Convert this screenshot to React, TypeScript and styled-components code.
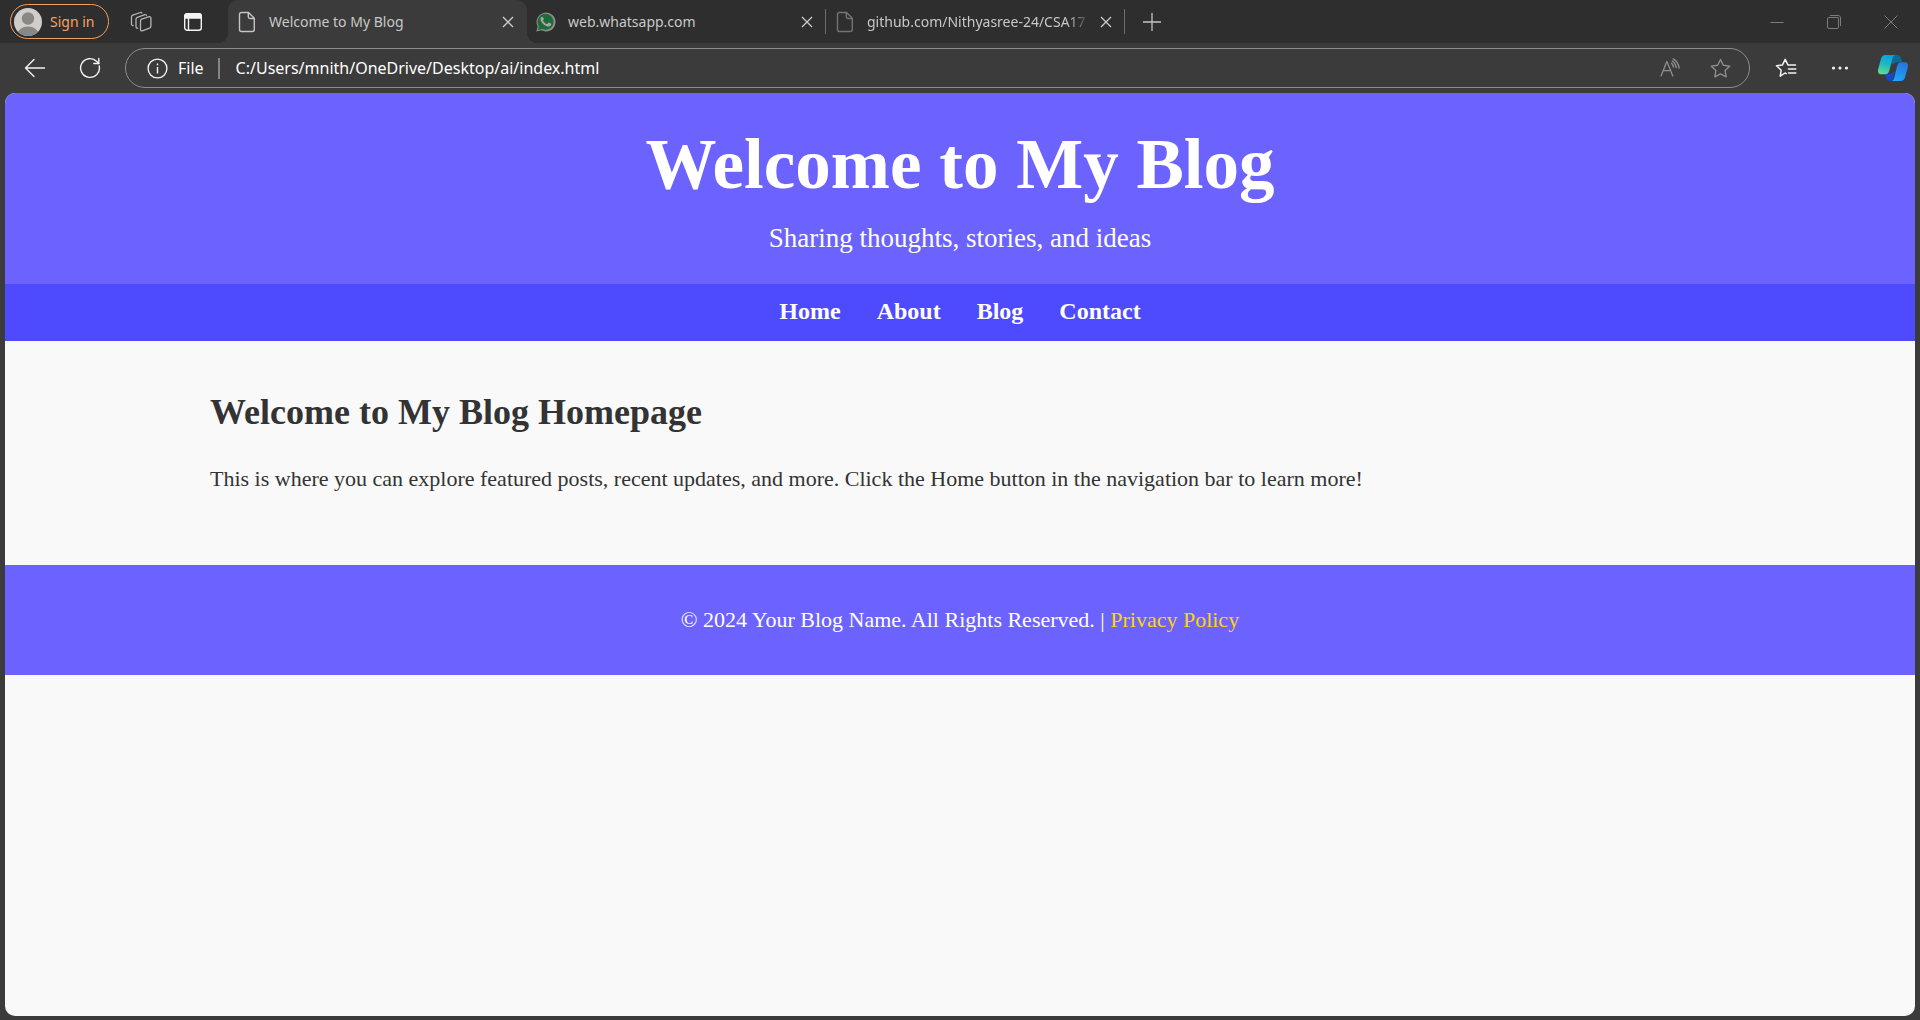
import React from "react";
import styled, { createGlobalStyle, css } from "styled-components";

const strip = "#2e2e2e";
const chrome = "#3b3b3b";
const ui = '"Segoe UI", "Noto Sans", "Open Sans", sans-serif';
const serif = 'Georgia, "Liberation Serif", serif';

const GlobalStyle = createGlobalStyle`
  * { box-sizing: border-box; }
  body { margin: 0; background: ${chrome}; }
  button, input { font: inherit; color: inherit; background: none; border: 0; padding: 0; margin: 0; }
  svg { display: block; flex: none; }
`;

const Window = styled.div`
  min-height: 100vh;
  display: flex;
  flex-direction: column;
  background: ${chrome};
  font-family: ${ui};
`;

const TabStrip = styled.div`
  display: flex;
  align-items: center;
  height: 43px;
  background: ${strip};
  color: #c8c8c8;
  font-size: 14px;
`;

const StripTools = styled.div`
  display: flex;
  align-items: center;
  flex: none;
  width: 228px;
  padding-left: 10px;
  gap: 21px;
`;

const Profile = styled.button`
  display: flex;
  align-items: center;
  gap: 8px;
  width: 99px;
  height: 35px;
  padding-left: 3px;
  border: 1px solid #f0a062;
  border-radius: 18px;
  color: #f3a467;
  white-space: nowrap;
`;

const IconButton = styled.button<{ $w?: number; $tone?: string }>`
  display: flex;
  align-items: center;
  justify-content: center;
  flex: none;
  width: ${(p) => p.$w ?? 20}px;
  height: 32px;
  color: ${(p) => p.$tone ?? "#f2f2f2"};
`;

const Tab = styled.div<{ $active?: boolean; $divided?: boolean }>`
  position: relative;
  display: flex;
  align-items: center;
  align-self: stretch;
  flex: 0 1 299px;
  min-width: 0;
  padding: 0 9px;
  ${(p) =>
    p.$active &&
    css`
      background: ${chrome};
      border-radius: 10px 10px 0 0;
      &::before,
      &::after {
        content: "";
        position: absolute;
        bottom: 0;
        width: 10px;
        height: 10px;
      }
      &::before {
        right: 100%;
        background: radial-gradient(circle at 0 0, transparent 10px, ${chrome} 10px);
      }
      &::after {
        left: 100%;
        background: radial-gradient(circle at 100% 0, transparent 10px, ${chrome} 10px);
      }
    `}
  ${(p) =>
    p.$divided &&
    css`
      &::after {
        content: "";
        position: absolute;
        right: 0;
        top: 9px;
        width: 1px;
        height: 25px;
        background: #6c6c6c;
      }
    `}
`;

const TabTitle = styled.button<{ $fade?: boolean }>`
  display: flex;
  align-items: center;
  gap: 12px;
  flex: 1;
  min-width: 0;
  height: 32px;
  text-align: left;
  white-space: nowrap;
  overflow: hidden;
  span {
    ${(p) =>
      p.$fade && "mask-image: linear-gradient(to right, #000 calc(100% - 20px), rgba(0, 0, 0, 0.2));"}
  }
`;

const WindowControls = styled.div`
  display: flex;
  align-items: center;
  margin-left: auto;
`;

const Toolbar = styled.div`
  display: flex;
  align-items: center;
  height: 50px;
  padding-left: 7px;
  color: #fff;
  font-size: 16px;
`;

const AddressBar = styled.form`
  display: flex;
  align-items: center;
  flex: 1;
  min-width: 0;
  height: 40px;
  margin: 0 8px;
  padding: 0 4px 0 21px;
  border: 1px solid #8d8d8d;
  border-radius: 20px;
`;

const SiteInfo = styled.button`
  display: flex;
  align-items: center;
  gap: 10px;
  padding-right: 14px;
  line-height: 20px;
  border-right: 2px solid #858585;
`;

const Address = styled.input`
  flex: 1;
  min-width: 0;
  height: 32px;
  padding-left: 16px;
  outline: none;
`;

const Viewport = styled.div`
  flex: 1;
  margin: 0 5px 4px;
  border-radius: 10px;
  overflow: hidden;
  background: #f9f9f9;
  color: #333;
  font-family: ${serif};
`;

const Header = styled.header`
  display: flex;
  flex-direction: column;
  gap: 16px;
  padding: 31px 20px 27px;
  background: #6c63ff;
  color: #fff;
  text-align: center;
`;

const Title = styled.h1`
  margin: 0;
  font-size: 71px;
  line-height: 80px;
`;

const Tagline = styled.p`
  margin: 0;
  font-size: 27px;
  line-height: 37px;
`;

const Nav = styled.nav`
  display: flex;
  justify-content: center;
  gap: 36px;
  padding: 14px 20px 16px;
  background: #4e4bff;
`;

const NavLink = styled.a`
  color: #fff;
  font-size: 24px;
  font-weight: bold;
  line-height: 27px;
  text-decoration: none;
`;

const Main = styled.main`
  display: flex;
  flex-direction: column;
  gap: 28px;
  max-width: 1500px;
  margin: 0 auto;
  padding: 50px 0 69px;
`;

const Heading = styled.h2`
  margin: 0;
  font-size: 36px;
  line-height: 42px;
`;

const Text = styled.p`
  margin: 0;
  font-size: 22px;
  line-height: 35px;
`;

const Footer = styled.footer`
  padding: 37px 20px;
  background: #6c63ff;
  color: #fff;
  font-size: 22px;
  line-height: 36px;
  text-align: center;
`;

const PolicyLink = styled.a`
  color: #ffd700;
  text-decoration: none;
`;

const PageIcon = ({ color }: { color: string }) => (
  <svg width="20" height="22" viewBox="0 0 20 22" fill="none" stroke={color} strokeWidth="1.4" strokeLinejoin="round">
    <path d="M4.5 1.5h7l5.8 5.8v11.2a2 2 0 0 1-2 2H4.5a2 2 0 0 1-2-2v-15a2 2 0 0 1 2-2z" />
    <path d="M11.3 1.7v4.1a1.7 1.7 0 0 0 1.7 1.7h4.1" />
  </svg>
);

const WhatsAppIcon = () => (
  <svg width="20" height="20" viewBox="0 0 20 20">
    <path d="M.3 19.6l1.4-5A9.5 9.5 0 1 1 5.4 18.3z" fill="#8b8f8c" />
    <path d="M1.9 18l1-3.7A8 8 0 1 1 6 17z" fill="#1c6b38" />
    <path
      d="M6.9 5.3c-.3-.5-.5-.5-.9-.5-.5 0-1.500.7-1.500 2.200 0 3 4.300 7.600 8 7.600 1.600 0 2.700-1 2.700-2.300 0-.6-.1-.6-.5-.8l-1.800-.9c-.3-.1-.5-.1-.7.200l-.9 1.100c-.2.2-.4.2-.7.100-1.400-.6-2.700-1.700-3.500-3.200-.1-.3 0-.5.2-.7.6-.7.700-.9.500-1.300z"
      fill="#a3a8a4"
    />
  </svg>
);

const CloseIcon = () => (
  <svg width="12" height="12" viewBox="0 0 12 12" stroke="currentColor" strokeWidth="1.3">
    <path d="M1 1l10 10M11 1L1 11" />
  </svg>
);

const AvatarIcon = () => (
  <svg width="28" height="28" viewBox="0 0 28 28">
    <defs>
      <clipPath id="avatar">
        <circle cx="14" cy="14" r="14" />
      </clipPath>
    </defs>
    <g clipPath="url(#avatar)">
      <rect width="28" height="28" fill="#d0cecc" />
      <circle cx="14" cy="10.5" r="6.2" fill="#8b8785" />
      <ellipse cx="14" cy="26" rx="10.5" ry="7.5" fill="#8b8785" />
    </g>
  </svg>
);

const WorkspacesIcon = () => (
  <svg width="22" height="22" viewBox="0 0 22 22" fill="none" stroke="#b5b5b5" strokeWidth="1.3" strokeLinejoin="round" strokeLinecap="round">
    <path d="M11.6 8.2l7.6-2.5a1.3 1.3 0 0 1 1.7 1.3v8.3a2 2 0 0 1-1.4 1.9l-7.3 2.7a1.3 1.3 0 0 1-1.7-1.2v-8.5a2 2 0 0 1 1.1-2z" />
    <path d="M7.7 17.2a1.3 1.3 0 0 1-1.7-1.2V8.2a2 2 0 0 1 1.3-1.9l7.6-2.6a1.3 1.3 0 0 1 1.5.5" />
    <path d="M3.2 14.5a1.3 1.3 0 0 1-1.7-1.2V6.1a2 2 0 0 1 1.3-1.9l7.6-2.7a1.3 1.3 0 0 1 1.5.5" />
  </svg>
);

const TabActionsIcon = () => (
  <svg width="20" height="20" viewBox="0 0 20 20" fill="none" stroke="#f4f4f4" strokeWidth="1.4">
    <rect x="1.7" y="1.7" width="16.6" height="16.6" rx="2.5" />
    <path d="M1.7 6V4a2.3 2.3 0 0 1 2.3-2.3h12A2.3 2.3 0 0 1 18.3 4v2z" fill="#f4f4f4" />
    <path d="M5.5 6v12" />
  </svg>
);

const StarPath = "M10 1.4l2.7 5.5 6 .9-4.3 4.2 1 6L10 15.2 4.6 18l1-6L1.3 7.8l6-.9z";

const CopilotIcon = () => (
  <svg width="32" height="28" viewBox="0 0 32 28">
    <defs>
      <linearGradient id="copilotLeft" x1="0.6" y1="0" x2="0.3" y2="1">
        <stop offset="0" stopColor="#0a9fe0" />
        <stop offset="0.5" stopColor="#1fb9c2" />
        <stop offset="1" stopColor="#62dc8b" />
      </linearGradient>
      <linearGradient id="copilotRight" x1="0.7" y1="0" x2="0.3" y2="1">
        <stop offset="0" stopColor="#2a72e0" />
        <stop offset="1" stopColor="#18a9fb" />
      </linearGradient>
    </defs>
    <path d="M16 1h4c2.3 0 3.3 1 4 3.2l1.3 4H20c-2 0-3 1-3.6 2.8L13 8z" fill="#0d6a96" />
    <path d="M8 20h6l4-3-1.6 6.2c-.6 2.3-1.5 3.8-3.4 3.8-2.2 0-3-1-3.6-3z" fill="#1647d0" />
    <path d="M8.500 1H19c-2 0-3 1.400-3.600 3.500l-3.100 12.300c-.8 2.500-1.900 3.500-4.300 3.500H4.500C1.500 20.300.4 18 1.200 15L4 4.800C4.700 2.300 6 1 8.500 1z" fill="url(#copilotLeft)" />
    <path d="M23.500 27H14c2 0 2.800-1.400 3.400-3.500l2.800-11.800c.7-2.500 1.900-3.500 4.200-3.500h3.200c3 0 4 2.300 3.200 5.200L28 23.200c-.7 2.500-2 3.800-4.500 3.800z" fill="url(#copilotRight)" />
  </svg>
);

export default function App() {
  return (
    <Window>
      <GlobalStyle />
      <TabStrip>
        <StripTools>
          <Profile>
            <AvatarIcon />
            Sign in
          </Profile>
          <IconButton $w={22} aria-label="Workspaces"><WorkspacesIcon /></IconButton>
          <IconButton $w={40} aria-label="Tab actions"><TabActionsIcon /></IconButton>
        </StripTools>
        <Tab $active>
          <TabTitle>
            <PageIcon color="#c4c4c4" />
            <span>Welcome to My Blog</span>
          </TabTitle>
          <IconButton $tone="#cccccc" aria-label="Close tab"><CloseIcon /></IconButton>
        </Tab>
        <Tab $divided>
          <TabTitle>
            <WhatsAppIcon />
            <span>web.whatsapp.com</span>
          </TabTitle>
          <IconButton $tone="#cccccc" aria-label="Close tab"><CloseIcon /></IconButton>
        </Tab>
        <Tab $divided>
          <TabTitle $fade>
            <PageIcon color="#737373" />
            <span>github.com/Nithyasree-24/CSA17</span>
          </TabTitle>
          <IconButton $tone="#cccccc" aria-label="Close tab"><CloseIcon /></IconButton>
        </Tab>
        <IconButton $w={54} $tone="#c4c4c4" aria-label="New tab">
          <svg width="18" height="18" viewBox="0 0 18 18" stroke="currentColor" strokeWidth="1.3">
            <path d="M9 0v18M0 9h18" />
          </svg>
        </IconButton>
        <WindowControls>
          <IconButton $w={57} $tone="#7c7c7c" aria-label="Minimize">
            <svg width="14" height="14" viewBox="0 0 14 14" stroke="currentColor"><path d="M.5 7.5h13" /></svg>
          </IconButton>
          <IconButton $w={57} $tone="#7c7c7c" aria-label="Restore">
            <svg width="14" height="14" viewBox="0 0 14 14" fill="none" stroke="currentColor">
              <rect x=".5" y="2.5" width="11" height="11" rx="1.5" />
              <path d="M3 .5h8a2.5 2.5 0 0 1 2.5 2.5v8" />
            </svg>
          </IconButton>
          <IconButton $w={58} $tone="#7c7c7c" aria-label="Close window">
            <svg width="14" height="14" viewBox="0 0 14 14" stroke="currentColor"><path d="M.5.5l13 13M13.5.5l-13 13" /></svg>
          </IconButton>
        </WindowControls>
      </TabStrip>

      <Toolbar>
        <IconButton $w={55} aria-label="Back">
          <svg width="22" height="20" viewBox="0 0 22 20" fill="none" stroke="currentColor" strokeWidth="1.4" strokeLinecap="round" strokeLinejoin="round">
            <path d="M20.5 10H1.5M10 1.5L1.5 10l8.5 8.5" />
          </svg>
        </IconButton>
        <IconButton $w={55} aria-label="Refresh">
          <svg width="22" height="22" viewBox="0 0 22 22" fill="none" stroke="currentColor" strokeWidth="1.4" strokeLinecap="round" strokeLinejoin="round">
            <path d="M20.2 9A9.4 9.4 0 1 1 17.8 4.5L19.8 6.5" />
            <path d="M19.8 1.5v5h-5" />
          </svg>
        </IconButton>
        <AddressBar onSubmit={(e) => e.preventDefault()}>
          <SiteInfo type="button">
            <svg width="21" height="21" viewBox="0 0 21 21" fill="none" stroke="#f2f2f2" strokeWidth="1.4">
              <circle cx="10.5" cy="10.5" r="9.4" />
              <path d="M10.5 9v6.500M10.5 5.500v1.700" />
            </svg>
            File
          </SiteInfo>
          <Address aria-label="Address" defaultValue="C:/Users/mnith/OneDrive/Desktop/ai/index.html" spellCheck={false} />
          <IconButton type="button" $w={50} $tone="#8e8e8e" aria-label="Read aloud">
            <svg width="20" height="20" viewBox="0 0 20 20" fill="none" stroke="currentColor" strokeWidth="1.3" strokeLinecap="round" strokeLinejoin="round">
              <path d="M1 18L6.9 3.500 12.800 18M3 12.700h7.800" />
              <path d="M11.500 5.200a7 7 0 0 1 2 4M12.300 2.900a10 10 0 0 1 4 6.800M13.200.9a12 12 0 0 1 5.900 9.200" />
            </svg>
          </IconButton>
          <IconButton type="button" $w={50} $tone="#8e8e8e" aria-label="Add to favorites">
            <svg width="21" height="21" viewBox="0 0 20 20" fill="none" stroke="currentColor" strokeWidth="1.3" strokeLinejoin="round">
              <path d={StarPath} />
            </svg>
          </IconButton>
        </AddressBar>
        <IconButton $w={56} aria-label="Favorites">
          <svg width="22" height="20" viewBox="0 0 22 20" fill="none" stroke="currentColor" strokeWidth="1.5" strokeLinecap="round" strokeLinejoin="round">
            <path d="M11.2 15.6L10 15 5.2 18.2l1-6L1.500 7.800l6-.9L10.200 1.400l2.700 5.500h7.600M13.500 11h7.300M13.500 15h7.300" />
          </svg>
        </IconButton>
        <IconButton $w={52} aria-label="Settings and more">
          <svg width="18" height="6" viewBox="0 0 18 6" fill="currentColor">
            <circle cx="2.5" cy="3" r="1.6" /><circle cx="9" cy="3" r="1.6" /><circle cx="15.5" cy="3" r="1.6" />
          </svg>
        </IconButton>
        <IconButton $w={54} aria-label="Copilot"><CopilotIcon /></IconButton>
      </Toolbar>

      <Viewport>
        <Header>
          <Title>Welcome to My Blog</Title>
          <Tagline>Sharing thoughts, stories, and ideas</Tagline>
        </Header>
        <Nav>
          <NavLink href="#home">Home</NavLink>
          <NavLink href="#about">About</NavLink>
          <NavLink href="#blog">Blog</NavLink>
          <NavLink href="#contact">Contact</NavLink>
        </Nav>
        <Main>
          <Heading>Welcome to My Blog Homepage</Heading>
          <Text>
            This is where you can explore featured posts, recent updates, and more. Click the Home button in the
            navigation bar to learn more!
          </Text>
        </Main>
        <Footer>
          © 2024 Your Blog Name. All Rights Reserved. | <PolicyLink href="#privacy">Privacy Policy</PolicyLink>
        </Footer>
      </Viewport>
    </Window>
  );
}
